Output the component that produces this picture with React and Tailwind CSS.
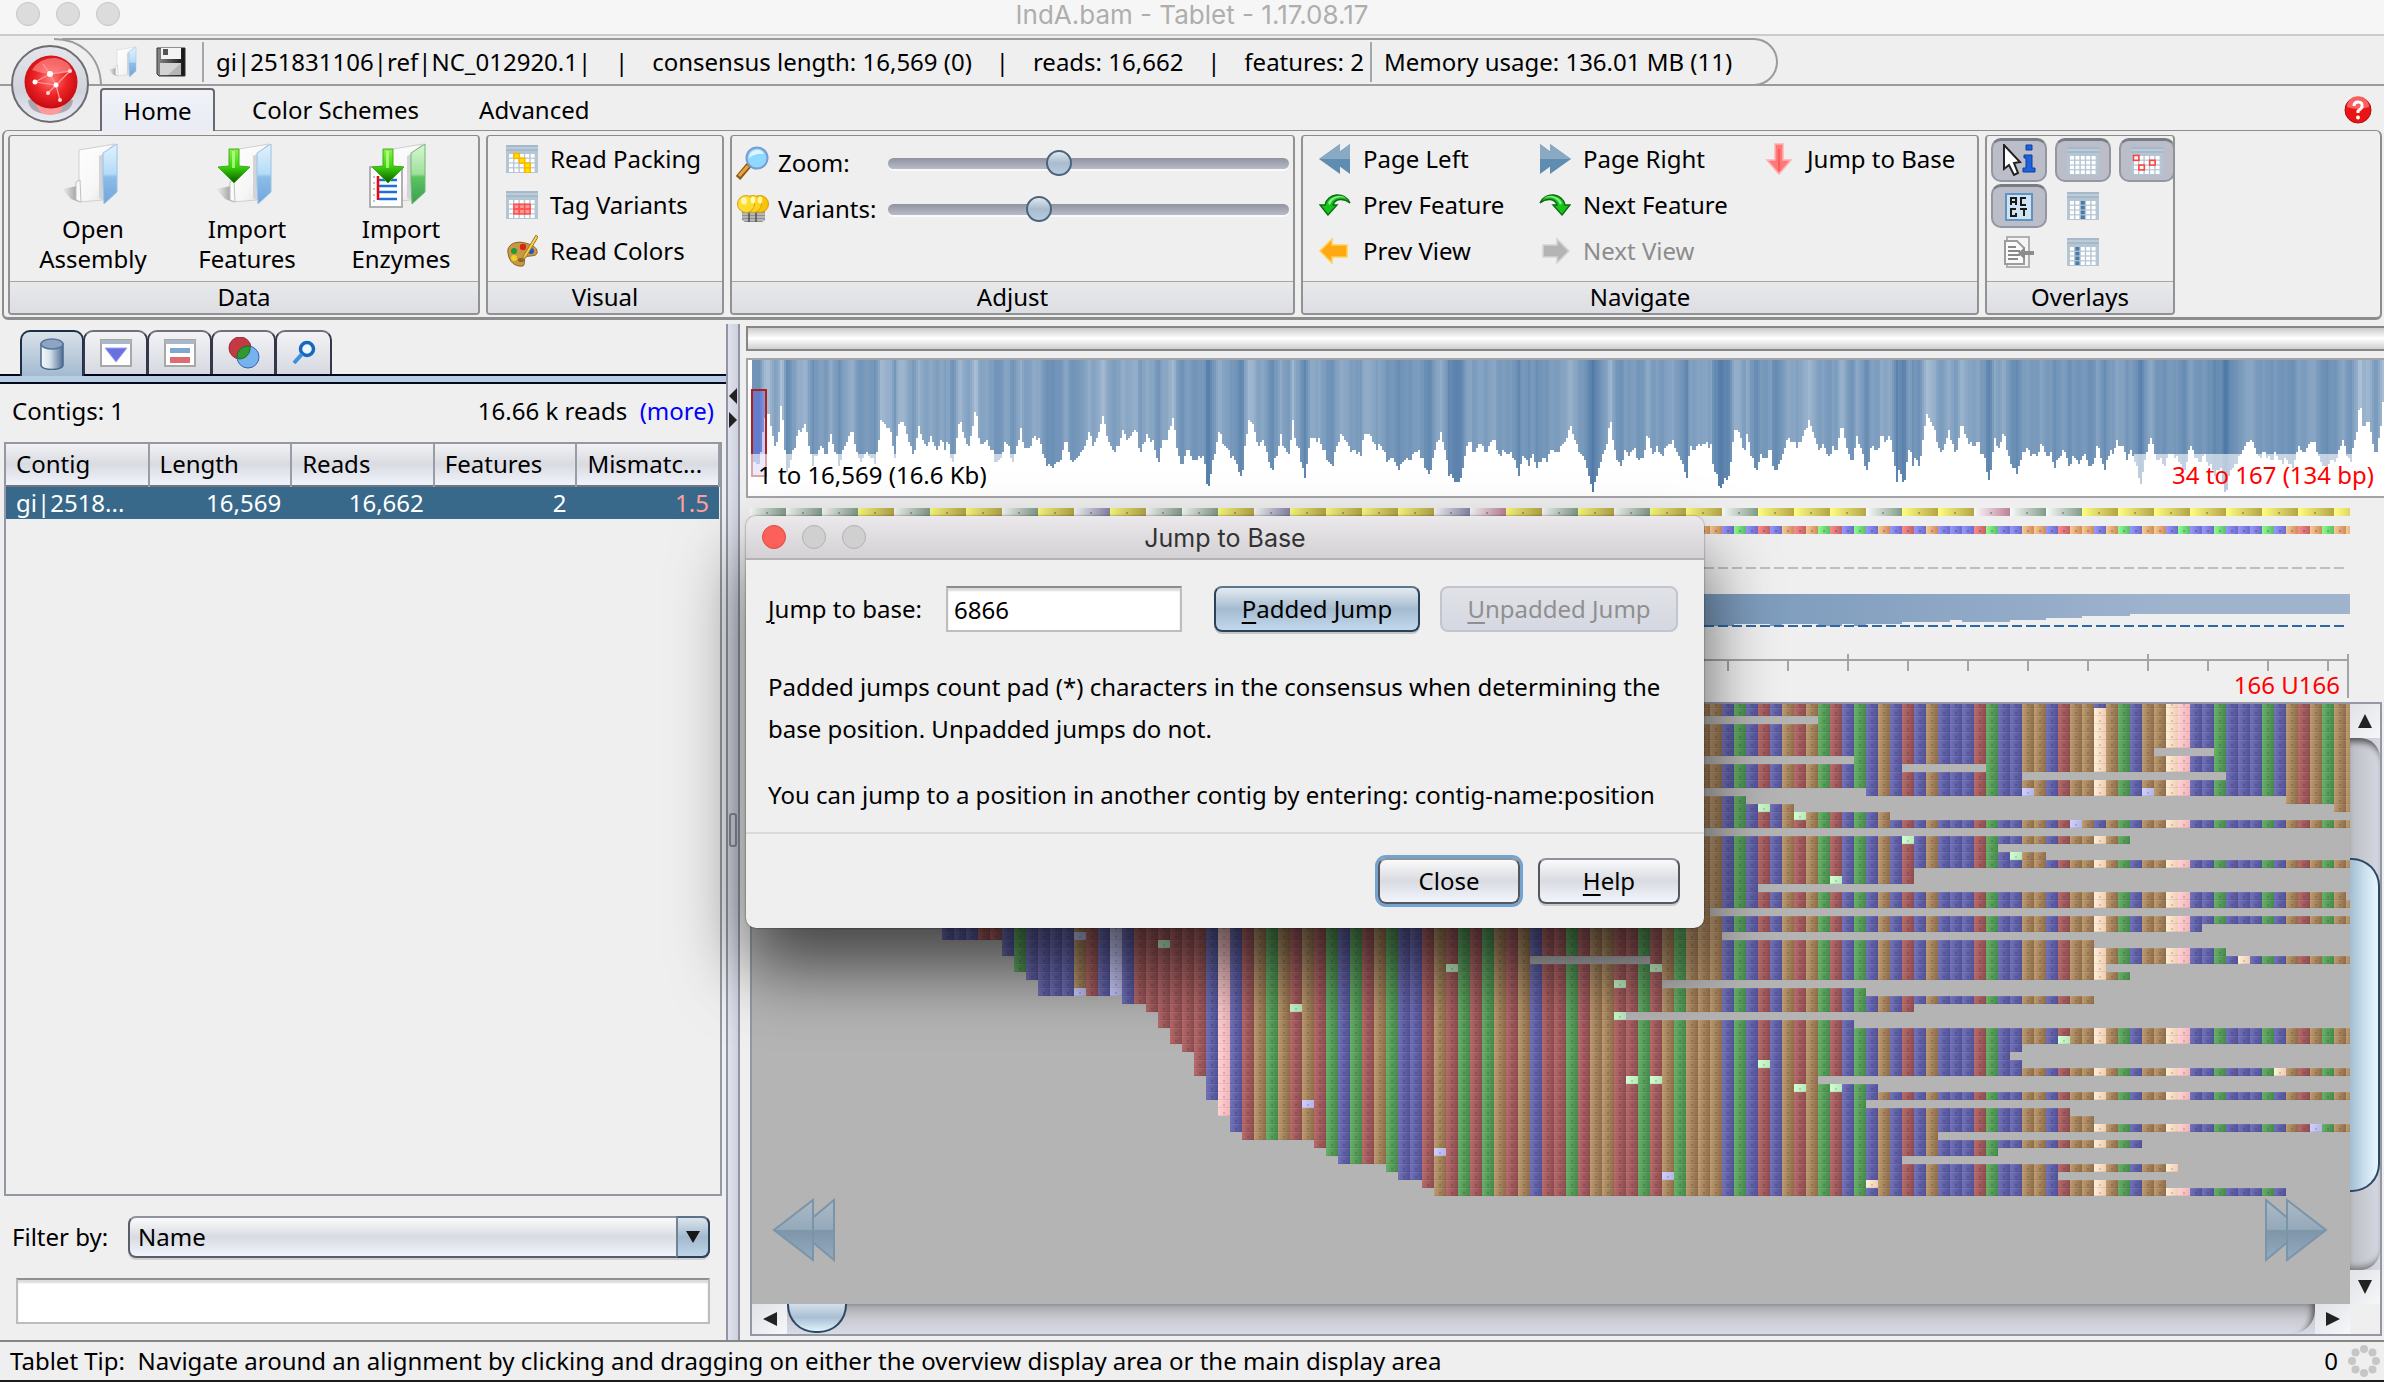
import React, { useState } from "react";

/* ---------- data ---------- */

// Consensus bases by column, starting at base 34.
const BASES =
  "BRGOBGRBBOGRRBOG" +
  "BBBRRBGBBBBORBTB" +
  "RRRRRRBPBROGOROR" +
  "GBGROGBBRORGRGOR" +
  "OBRRGROORRGROGOO" +
  "OBGBRBOROGRBGBOB" +
  "RBOBBBRGBBOOBROO" +
  "VOGBOOVPBBGBBBGB" +
  "OROGOO";

const CONSENSUS_RIGHT = "OOBGBRBOROGRBGBOBRBOBBBRGBBOOBROOBOGBOOBGBBGBBBGBOROGOO";

const PROTEINS = "GGGYGYYGYBYGGYBYYYYBPYGYGYYGYYYGYYPGGYYYYYYYY";

// First visible column of each read row, from row 26 down.
const STARTS = [
  16, 16, 16, 16, 21, 21, 22, 22, 23, 24, 24, 31, 33, 34, 34, 35, 35, 36, 37, 37, 37, 38, 38, 38, 39, 39,
  40, 40, 41, 47, 48, 49, 53, 54, 56, 57,
];

// Empty stretches in the packed rows: row, first column, end column.
const GAPS = [
  [2, 60, 89], [6, 117, 122], [7, 60, 92], [8, 96, 103], [9, 106, 123], [11, 60, 93], [12, 83, 128],
  [13, 87, 132], [14, 95, 134], [16, 60, 134], [17, 115, 134], [18, 104, 134], [19, 108, 134],
  [21, 97, 134], [22, 97, 134], [23, 84, 134], [24, 133, 134], [26, 80, 134], [28, 121, 134],
  [29, 81, 134], [30, 112, 134], [31, 123, 134], [32, 65, 75], [33, 113, 134], [34, 115, 134],
  [35, 76, 134], [36, 93, 134], [37, 112, 134], [38, 97, 134], [39, 73, 134], [40, 92, 134],
  [43, 106, 134], [44, 105, 134], [45, 106, 134], [47, 89, 134], [48, 94, 134], [50, 93, 134],
  [51, 110, 134], [52, 112, 134], [54, 99, 134], [55, 116, 134], [56, 104, 134], [57, 96, 134],
  [58, 119, 134], [59, 109, 134], [60, 118, 134], [61, 128, 134],
];

// Single variant bases: row, column, kind.
const VARIANTS = [
  [0, 112, "B"], [0, 118, "V"], [11, 106, "T"], [11, 116, "T"], [13, 84, "L"], [14, 87, "L"], [15, 110, "T"],
  [15, 112, "B"], [17, 96, "L"], [19, 105, "L"], [22, 90, "L"], [32, 124, "V"], [42, 109, "L"], [45, 84, "L"],
  [46, 127, "V"], [48, 87, "L"], [48, 90, "L"], [53, 130, "T"], [60, 93, "V"], [29, 27, "T"],
  [36, 27, "T"], [30, 34, "L"], [33, 58, "L"], [33, 75, "L"], [35, 72, "L"], [38, 45, "L"],
  [39, 72, "L"], [47, 73, "L"], [47, 75, "L"], [50, 46, "T"], [56, 57, "T"], [59, 76, "T"],
];

const COVERAGE_A = [
  36, 420, 46, 420, 50, 360, 54, 290, 62, 285, 66, 340, 72, 380, 76, 345, 80, 262, 84, 320, 88, 450, 95, 440,
  100, 390, 106, 345, 114, 325, 120, 305, 124, 360, 130, 430, 138, 405, 146, 380, 152, 405, 160, 345, 166, 385,
  174, 440, 180, 380, 188, 350, 194, 330, 200, 375, 208, 420, 216, 385, 224, 405, 230, 430, 236, 360, 240, 300,
  248, 310, 256, 330, 262, 415, 268, 320, 275, 305, 282, 350, 290, 400, 296, 375, 300, 300, 306, 350, 312, 390,
  320, 340, 328, 395, 336, 355, 342, 385, 348, 365, 354, 450, 360, 370, 366, 290, 372, 340, 380, 388, 386, 330,
  392, 270, 398, 380, 406, 360, 414, 370, 424, 430, 432, 420, 438, 370, 444, 380, 452, 425, 458, 370, 464, 330,
  470, 380, 478, 395, 486, 350, 494, 365, 502, 420, 512, 445, 520, 420, 528, 415, 536, 355, 544, 430, 552, 420,
  558, 400, 568, 380, 574, 325, 580, 385, 588, 345, 596, 290, 604, 365, 612, 400, 620, 380, 626, 325, 634, 355,
  642, 345, 648, 325, 654, 405, 662, 360, 668, 345, 676, 370, 684, 425, 690, 370, 698, 355, 708, 290, 714, 380,
  720, 440, 730, 385, 740, 425, 750, 400, 758, 430, 764, 520, 768, 450, 774, 400, 782, 325, 790, 380, 800, 410,
  810, 430, 818, 470, 824, 350, 830, 290, 838, 340, 844, 380, 850, 360, 858, 410, 866, 448, 874, 400, 880, 340,
  888, 405, 894, 410, 899, 300, 904, 370, 910, 400, 918, 470, 926, 370, 932, 340, 940, 360, 950, 400, 962, 440,
  970, 370, 976, 350, 984, 365, 992, 385, 1000, 400, 1008, 400, 1016, 325, 1024, 350, 1032, 385, 1042, 375,
  1050, 425, 1060, 410, 1070, 445, 1078, 415, 1086, 430, 1096, 385, 1106, 420, 1116, 460, 1124, 420, 1130, 365,
  1136, 330, 1142, 380, 1148, 460, 1160, 490, 1170, 460, 1176, 385, 1182, 355, 1190, 410, 1198, 360, 1206, 400,
  1214, 370, 1220, 355, 1230, 400, 1240, 400, 1252, 410, 1260, 465, 1268, 410, 1276, 435, 1284, 400, 1290, 445,
  1298, 415, 1306, 420, 1312, 390, 1322, 400, 1330, 370, 1338, 355, 1344, 315, 1350, 370, 1358, 390, 1364, 400,
  1372, 460, 1380, 515, 1388, 450, 1396, 400, 1402, 370, 1407, 295, 1412, 365, 1418, 430, 1424, 440, 1430, 390,
  1438, 400, 1446, 385, 1452, 430, 1460, 400, 1468, 340, 1474, 400, 1482, 380, 1490, 410, 1498, 375, 1506, 355,
  1514, 400, 1522, 420, 1530, 480, 1534, 385, 1542, 400, 1550, 370, 1558, 375, 1568, 380,
];
const COVERAGE_B = [
  52, 450, 60, 470, 69, 520, 76, 465, 84, 470, 90, 440, 95, 370, 101, 305, 106, 330, 112, 355, 120, 400,
  128, 340, 136, 400, 147, 470, 156, 395, 166, 425, 178, 385, 190, 455, 200, 420, 210, 395, 218, 350, 228, 365,
  240, 380, 252, 360, 262, 320, 268, 305, 278, 335, 290, 405, 300, 370, 310, 420, 322, 380, 328, 410, 335, 350,
  341, 312, 350, 375, 364, 430, 376, 350, 384, 380, 392, 425, 400, 455, 406, 390, 414, 375, 422, 405, 432, 330,
  440, 370, 449, 330, 456, 385, 464, 480, 472, 455, 483, 490, 490, 410, 495, 385, 500, 440, 508, 410, 516, 440,
  522, 380, 530, 320, 535, 270, 540, 305, 548, 310, 556, 365, 566, 400, 574, 370, 583, 330, 590, 365, 598, 395,
  606, 350, 612, 300, 620, 345, 630, 370, 640, 375, 648, 360, 656, 400, 664, 420, 674, 485, 680, 420, 686, 360,
  696, 380, 708, 330, 714, 380, 724, 440, 738, 460, 746, 410, 760, 380, 770, 405, 782, 415, 792, 360, 800, 400,
  812, 400, 822, 450, 830, 420, 840, 385, 848, 405, 856, 445, 864, 405, 874, 430, 886, 400, 900, 445, 908, 430,
  919, 380, 926, 400, 934, 465, 942, 410, 954, 390, 964, 360, 970, 385, 975, 360, 984, 415, 996, 390, 1004, 430,
  1018, 485, 1026, 410, 1041, 355, 1050, 415, 1060, 420, 1072, 430, 1086, 395, 1100, 420, 1116, 450, 1128, 370,
  1140, 410, 1150, 435, 1160, 405, 1172, 430, 1184, 470, 1196, 440, 1209, 530, 1216, 460, 1230, 430, 1244, 400,
  1256, 370, 1267, 355, 1280, 400, 1292, 405, 1300, 400, 1312, 420, 1322, 395, 1332, 430, 1346, 410, 1360, 450,
  1372, 380, 1382, 395, 1396, 370, 1406, 355, 1416, 395, 1430, 450, 1444, 430, 1456, 425, 1464, 385, 1475, 350,
  1482, 400, 1490, 430, 1500, 370, 1506, 320, 1511, 235, 1516, 300, 1522, 325, 1530, 305, 1536, 330, 1544, 400,
  1552, 385, 1560, 300, 1566, 200,
];

function coveragePoints() {
  const pts = [];
  for (let i = 0; i < COVERAGE_A.length; i += 2) pts.push([COVERAGE_A[i] / 1.6 - 22, (COVERAGE_A[i + 1] - 120) / 3]);
  for (let i = 0; i < COVERAGE_B.length; i += 2) pts.push([COVERAGE_B[i] / 2.2594 + 938, (COVERAGE_B[i + 1] - 120) / 3]);
  return pts;
}

function coverageBars() {
  const pts = coveragePoints();
  const bars = [];
  let k = 0;
  let seed = 7;
  for (let x = 0; x < 1634; x += 2) {
    while (k < pts.length - 2 && pts[k + 1][0] < x) k++;
    const [x0, y0] = pts[k];
    const [x1, y1] = pts[k + 1];
    const t = Math.max(0, Math.min(1, (x - x0) / (x1 - x0 || 1)));
    seed = (seed * 1103515245 + 12345) % 2147483648;
    const jitter = ((seed >> 8) % 7) - 3;
    const h = Math.max(4, Math.min(136, 2 * Math.round((y0 + (y1 - y0) * t + jitter) / 2)));
    bars.push([x, h]);
  }
  return bars;
}

function shade(h) {
  const t = Math.max(0, Math.min(1, (h - 50) / 84));
  const mix = (a, b) => Math.round(a + (b - a) * t);
  return `rgb(${mix(170, 78)},${mix(191, 121)},${mix(213, 166)})`;
}

function readRuns() {
  const runs = [];
  const cell = (r, c) => {
    if (c < (r < 26 ? 16 : STARTS[r - 26])) return null;
    for (const g of GAPS) if (g[0] === r && c >= g[1] && c < g[2]) return null;
    for (const v of VARIANTS) if (v[0] === r && v[1] === c) return v[2];
    return BASES[c];
  };
  for (let c = 0; c < 134; c++) {
    let from = 0;
    let kind = cell(0, c);
    for (let r = 1; r <= 62; r++) {
      const k = r < 62 ? cell(r, c) : undefined;
      if (k !== kind) {
        if (kind) runs.push([c, from, r, kind]);
        from = r;
        kind = k;
      }
    }
  }
  return runs;
}

const BARS = coverageBars();
const RUNS = readRuns();

/* ---------- icons ---------- */

function Folder({ size = 64, green = false, id }) {
  return (
    <svg width={size} height={size} viewBox="0 0 64 64" aria-hidden="true">
      <defs>
        <linearGradient id={id + "a"} x1="0" y1="0" x2="0" y2="1">
          <stop offset="0" stopColor={green ? "#d8f6d4" : "#e3f3fd"} />
          <stop offset=".5" stopColor={green ? "#9fe09b" : "#b4dbf7"} />
          <stop offset=".55" stopColor={green ? "#5cc45f" : "#8dbde8"} />
          <stop offset="1" stopColor={green ? "#3a9e52" : "#6fa5dc"} />
        </linearGradient>
        <linearGradient id={id + "b"} x1="0" y1="0" x2="1" y2="1">
          <stop offset="0" stopColor="#ffffff" />
          <stop offset=".6" stopColor="#f6f6f6" />
          <stop offset="1" stopColor="#d9dadc" />
        </linearGradient>
        <linearGradient id={id + "c"} x1="0" y1="0" x2="1" y2="0">
          <stop offset="0" stopColor="#9a9a9a" stopOpacity="0" />
          <stop offset="1" stopColor="#8a8a8a" stopOpacity=".9" />
        </linearGradient>
      </defs>
      <path d="M1 47 L16 44 L18 60 L10 57 Z" fill={"url(#" + id + "c)"} />
      <path d="M18 8 L54 2 L42 12 L42 58 L18 60 Z" fill={"url(#" + id + "b)"} stroke="#cfcfcf" />
      <path d="M38 14 L42 12 V58 L38 56 Z" fill="#d4d4d8" />
      <path d="M15 40 L19 38 L20 60 L15 58 Z" fill="#fafafa" stroke="#c0c0c0" />
      <path d="M42 11 L56 2 L56 50 L43 62 L42 40 Z" fill={"url(#" + id + "a)"} stroke={green ? "#6cba70" : "#9cc2e6"} />
    </svg>
  );
}

function GreenDown({ className }) {
  return (
    <svg className={className} width="34" height="36" viewBox="0 0 34 36" aria-hidden="true">
      <defs>
        <linearGradient id="gdown" x1="0" y1="0" x2="0" y2="1">
          <stop offset="0" stopColor="#8df04a" />
          <stop offset=".5" stopColor="#3ed80c" />
          <stop offset="1" stopColor="#0a5a00" />
        </linearGradient>
      </defs>
      <path d="M12 1 H22 V18 L33 19 L17 35 L1 19 L12 18 Z" fill="url(#gdown)" stroke="#3fae1c" />
      <path d="M15 3 H18 V20 H15 Z" fill="#c8ff9e" opacity=".7" />
    </svg>
  );
}

function Floppy() {
  return (
    <svg width="30" height="30" viewBox="0 0 30 30" aria-hidden="true">
      <defs>
        <linearGradient id="flop" x1="0" y1="0" x2="1" y2="0">
          <stop offset="0" stopColor="#8a8a8a" />
          <stop offset="1" stopColor="#111" />
        </linearGradient>
      </defs>
      <path d="M1 1 H29 V29 H3 L1 27 Z" fill="url(#flop)" stroke="#333" />
      <path d="M5 1 H25 V12 H5 Z" fill="#f4f4f4" />
      <path d="M7 2 H12 V8 H7 Z" fill="#555" />
      <path d="M4 16 H25 V28 H4 Z" fill="#b5b5b5" />
      <path d="M4 16 H25 L12 28 H4 Z" fill="#d3d3d3" />
    </svg>
  );
}

function Grid({ cells = [], color = "#4a7ba8", fill }) {
  const out = [];
  const marks = [];
  for (let y = 0; y < 4; y++)
    for (let x = 0; x < 5; x++) {
      const hit = cells.some((c) => c[0] === x && c[1] === y);
      out.push(<rect key={x + "-" + y} x={3 + x * 5.4} y={9 + y * 4.8} width="4" height="3.6" fill={hit && !fill ? color : "#fff"} />);
      if (hit && fill)
        marks.push(<rect key={x + "-" + y} x={2.5 + x * 5.4} y={8.5 + y * 4.8} width="5.4" height="4.8" fill={fill} stroke={color} strokeWidth="1.6" />);
    }
  return (
    <svg width="32" height="28" viewBox="0 0 32 28" preserveAspectRatio="none" aria-hidden="true">
      <rect x="0" y="0" width="32" height="28" fill="#b4c5d3" />
      <rect x="0" y="0" width="32" height="6" fill="#a5b9ca" />
      <rect x="0" y="2" width="32" height="2" fill="#bccbd8" />
      {out}
      {marks}
    </svg>
  );
}

const ICONS = {
  palette: (
    <svg width="32" height="32" viewBox="0 0 32 32" aria-hidden="true">
      <path d="M2 18 C0 10 10 5 19 8 C28 10 32 14 31 18 C30 22 24 20 20 22 C17 24 20 28 17 31 C9 32 3 27 2 18 Z" fill="#c99846" stroke="#8c6424" />
      <ellipse cx="15" cy="25" rx="3" ry="2" fill="#8c6424" />
      <circle cx="8" cy="16" r="3" fill="#1f9a3a" />
      <circle cx="17" cy="12" r="3.2" fill="#d8261c" />
      <circle cx="25" cy="16" r="3" fill="#2156c8" />
      <circle cx="8" cy="23" r="3" fill="#f0d020" />
      <path d="M30 0 L32 2 L20 22 L16 25 L18 20 Z" fill="#f0d050" stroke="#a07a20" />
    </svg>
  ),
  zoom: (
    <svg width="34" height="34" viewBox="0 0 34 34" aria-hidden="true">
      <path d="M2 32 L13 19" stroke="#8a5a1c" strokeWidth="6" />
      <path d="M3 30 L12 20" stroke="#f0a040" strokeWidth="3" />
      <circle cx="21" cy="12" r="10.5" fill="#8fd8ff" stroke="#7a9cd0" strokeWidth="2" />
      <path d="M13 12 A8 8 0 0 1 28 8 Q20 7 13 12 Z" fill="#dcf5ff" />
    </svg>
  ),
  bulbs: (
    <svg width="34" height="30" viewBox="0 0 34 30" aria-hidden="true">
      <path d="M6 17 H29 V26 L26 28 H9 L6 26 Z" fill="#8f8f8f" />
      <path d="M6 20 H29 M6 23 H29 M7 26 H28" stroke="#dedede" strokeWidth="1.2" />
      <path d="M13 19 V28 M20 19 V28" stroke="#4a4a4a" strokeWidth="1.4" />
      <circle cx="24" cy="10" r="8.5" fill="#f8c408" stroke="#d49c06" />
      <circle cx="17" cy="10" r="8.5" fill="#fcd420" stroke="#d8a410" />
      <circle cx="10" cy="10" r="8.5" fill="#ffdc30" stroke="#d8a410" />
      <ellipse cx="8" cy="7" rx="3" ry="3.5" fill="#fff8b0" />
      <ellipse cx="17" cy="6" rx="2.4" ry="3.5" fill="#fff8b0" />
      <ellipse cx="24" cy="6" rx="2.4" ry="3.5" fill="#fff4a0" />
    </svg>
  ),
  left: (
    <svg width="32" height="32" viewBox="0 0 32 32" aria-hidden="true">
      <path d="M21 1 V31 L0 16 Z M31 1 V31 L12 17 V15 Z" fill="#5f8db2" />
      <path d="M21 1 V16 H0 Z M31 1 V16 H12 Z" fill="#8aaac4" />
    </svg>
  ),
  right: (
    <svg width="32" height="32" viewBox="0 0 32 32" aria-hidden="true">
      <path d="M11 1 V31 L32 16 Z M1 1 V31 L20 17 V15 Z" fill="#5f8db2" />
      <path d="M11 1 V16 H32 Z M1 1 V16 H20 Z" fill="#8aaac4" />
    </svg>
  ),
  prevFeature: (
    <svg width="32" height="24" viewBox="0 0 32 24" aria-hidden="true">
      <path d="M9 22 L1 12 H6 C8 0 26 -2 31 10 C25 5 16 5 14 12 H18 Z" fill="#17c41c" stroke="#0b6a12" strokeWidth="1.4" />
      <path d="M9 10 C12 3 22 1 27 5 C20 3 13 5 11 12 Z" fill="#8df08a" />
    </svg>
  ),
  nextFeature: (
    <svg width="32" height="24" viewBox="0 0 32 24" aria-hidden="true">
      <path d="M23 22 L31 12 H26 C24 0 6 -2 1 10 C7 5 16 5 18 12 H14 Z" fill="#17c41c" stroke="#0b6a12" strokeWidth="1.4" />
      <path d="M23 10 C20 3 10 1 5 5 C12 3 19 5 21 12 Z" fill="#8df08a" />
    </svg>
  ),
  prevView: (
    <svg width="32" height="28" viewBox="0 0 32 28" aria-hidden="true">
      <path d="M1 14 L13 2 V8 H28 V20 H13 V26 Z" fill="#ffa911" stroke="#ffcf5a" strokeWidth="1.5" />
    </svg>
  ),
  nextView: (
    <svg width="32" height="28" viewBox="0 0 32 28" aria-hidden="true">
      <path d="M30 14 L18 2 V8 H4 V20 H18 V26 Z" fill="#b4b4b4" stroke="#d4d4d4" strokeWidth="1.5" />
    </svg>
  ),
  jump: (
    <svg width="28" height="32" viewBox="0 0 28 32" aria-hidden="true">
      <path d="M14 31 L2 17 H10 V1 H18 V17 H26 Z" fill="#ff7878" stroke="#ffb0b0" strokeWidth="1.5" />
      <path d="M14 28 V6" stroke="#ff5a5a" strokeWidth="2" />
    </svg>
  ),
  info: (
    <svg width="34" height="34" viewBox="0 0 34 34" aria-hidden="true">
      <path d="M2 1 V25 L7 21 L12 31 L16 29 L12 19 L18 18 Z" fill="#fff" stroke="#222" strokeWidth="2" />
      <path d="M24 1 H30 V6 H24 Z M22 11 H30 V24 H33 V28 H21 V24 H24 V14 H22 Z" fill="#1f63dc" stroke="#0f3f9c" />
    </svg>
  ),
  acgt: (
    <svg width="28" height="28" viewBox="0 0 28 28" aria-hidden="true">
      <rect x="1" y="1" width="26" height="26" fill="#cfe3f3" stroke="#5c94c4" strokeWidth="2" />
      <path
        d="M6 12 V5 H11 V12 M6 9 H11 M21 5 H16 V12 H21 M11 16 H6 V23 H11 V20 M15 16 H22 M19 16 V23"
        fill="none"
        stroke="#1a1a1a"
        strokeWidth="2"
      />
    </svg>
  ),
  doc: (
    <svg width="32" height="32" viewBox="0 0 32 32" aria-hidden="true">
      <path d="M4 1 H26 V31 H4 Z" fill="#f4f4f4" stroke="#b0b0b0" strokeWidth="2" />
      <path d="M2 5 H14 L21 12 V28 H2 Z" fill="#fafafa" stroke="#9c9c9c" strokeWidth="2" />
      <path d="M5 11 H13 M5 15 H17 M5 19 H17 M5 23 H15" stroke="#888" strokeWidth="2" />
      <path d="M15 17 L22 11 V15 H31 V19 H22 V24 Z" fill="#8c8c8c" />
    </svg>
  ),
  cylinder: (
    <svg width="24" height="32" viewBox="0 0 24 32" aria-hidden="true">
      <defs>
        <linearGradient id="cyl" x1="0" y1="0" x2="1" y2="0">
          <stop offset="0" stopColor="#f4f8fb" />
          <stop offset=".4" stopColor="#d8e2ec" />
          <stop offset="1" stopColor="#4f6f96" />
        </linearGradient>
      </defs>
      <path d="M1 6 V27 C1 33 23 33 23 27 V6 Z" fill="url(#cyl)" stroke="#4c668a" strokeWidth="1.5" />
      <ellipse cx="12" cy="6" rx="11" ry="5" fill="#8ba5c2" stroke="#5a7698" strokeWidth="1.5" />
    </svg>
  ),
  triangle: (
    <svg width="32" height="28" viewBox="0 0 32 28" aria-hidden="true">
      <rect x="1" y="1" width="30" height="26" fill="#fff" stroke="#a8a8a8" strokeWidth="2" />
      <rect x="1" y="1" width="30" height="4" fill="#a9b7c6" />
      <path d="M5 9 H27 L16 23 Z" fill="#6a70e0" stroke="#9fa4f0" />
    </svg>
  ),
  lines: (
    <svg width="32" height="28" viewBox="0 0 32 28" aria-hidden="true">
      <rect x="1" y="1" width="30" height="26" fill="#fff" stroke="#a8a8a8" strokeWidth="2" />
      <rect x="1" y="1" width="30" height="4" fill="#a9b7c6" />
      <rect x="6" y="9" width="20" height="5" fill="#7fa8d0" />
      <rect x="6" y="18" width="20" height="6" fill="#de6a72" />
    </svg>
  ),
  venn: (
    <svg width="32" height="32" viewBox="0 0 32 32" aria-hidden="true">
      <circle cx="12" cy="11" r="11" fill="#c43a44" stroke="#9c2c38" />
      <circle cx="20" cy="20" r="11" fill="#76b2ee" stroke="#3a62b4" />
      <path d="M9 20 A11 11 0 0 1 22 9.200 A11 11 0 0 1 11 22 Z" fill="#2f9a30" stroke="#1c6a24" />
    </svg>
  ),
  search: (
    <svg width="24" height="26" viewBox="0 0 24 26" aria-hidden="true">
      <circle cx="15" cy="9" r="6.500" fill="#eef6ff" stroke="#1668bc" strokeWidth="3.500" />
      <path d="M10 14 L2 23" stroke="#3b92e0" strokeWidth="4" />
    </svg>
  ),
};

function Logo() {
  return (
    <svg width="80" height="80" viewBox="0 0 80 80" aria-hidden="true">
      <defs>
        <radialGradient id="ball" cx=".5" cy=".45" r=".55">
          <stop offset="0" stopColor="#ff7a78" />
          <stop offset=".55" stopColor="#ee2426" />
          <stop offset="1" stopColor="#c40a10" />
        </radialGradient>
        <linearGradient id="ring" x1="0" y1="0" x2="0" y2="1">
          <stop offset="0" stopColor="#e4e6ec" />
          <stop offset=".6" stopColor="#d0d3dc" />
          <stop offset="1" stopColor="#e9ecf4" />
        </linearGradient>
      </defs>
      <circle cx="40" cy="40" r="38" fill="url(#ring)" stroke="#6d6d70" strokeWidth="2" />
      <path d="M18 56 Q40 50 63 56 Q62 70 40 70 Q19 70 18 56 Z" fill="#8b8188" opacity=".6" />
      <path d="M26 58 H54 Q52 71 40 71 Q28 71 26 58 Z" fill="#ff9a9a" />
      <circle cx="41" cy="38" r="26.500" fill="url(#ball)" />
      <path d="M22 26 Q30 13 46 14 Q60 17 62 27 Q44 34 22 26 Z" fill="#ff9a98" opacity=".6" />
      <path d="M33 20 L40 30 L60 27 M40 30 L25 38 M40 30 L46 41 L25 38 M46 41 L60 27 M46 41 L38 49 M46 41 L50 56" stroke="#ff9c9c" strokeWidth="1.200" fill="none" />
      <circle cx="40" cy="30" r="3" fill="#fff" />
      <circle cx="25" cy="38" r="2.500" fill="#fff" />
      <circle cx="46" cy="41" r="2.500" fill="#fff" />
      <circle cx="60" cy="27" r="2" fill="#ffdada" />
      <circle cx="38" cy="49" r="2" fill="#ffdada" />
      <circle cx="50" cy="56" r="2" fill="#ffdada" />
    </svg>
  );
}

/* ---------- ribbon ---------- */

function Group({ title, className, children }) {
  return (
    <section className={"flex flex-col overflow-hidden rounded-[4px] border-2 border-t border-[#929292] border-t-[#8a8a8a] " + className}>
      <div className="flex-1">{children}</div>
      <h2 className="h-[32px] border-t border-[#a4a4a4] bg-linear-to-b from-[#e8e9eb] to-[#dcdee3] text-center leading-[30px]">
        {title}
      </h2>
    </section>
  );
}

function BigButton({ icon, top, bottom, className }) {
  return (
    <button type="button" className={"flex flex-col items-center pt-1.5 leading-[30px] " + className}>
      <span className="relative mb-2 h-[64px] w-[64px]">{icon}</span>
      <span>{top}</span>
      <span>{bottom}</span>
    </button>
  );
}

function RibbonButton({ icon, children, disabled }) {
  return (
    <button type="button" disabled={disabled} className="flex h-[46px] items-center gap-3 whitespace-nowrap disabled:text-[#8c8c8c]">
      <span className="flex w-8 justify-center">{icon}</span>
      {children}
    </button>
  );
}

function RibbonSlider({ id, icon, label, initial }) {
  const [value, setValue] = useState(initial);
  return (
    <div className="flex h-[46px] items-center pl-1 pr-1">
      <span className="w-[42px]">{icon}</span>
      <label htmlFor={id} className="w-[110px]">
        {label}
      </label>
      <input
        id={id}
        type="range"
        min="0"
        max="1000"
        value={value}
        onChange={(e) => setValue(Number(e.target.value))}
        className="h-[11px] min-w-0 flex-1 appearance-none rounded-full bg-linear-to-b from-[#8f939f] to-[#b9bcc8] shadow-[0_2px_0_#fafafa] [&::-webkit-slider-thumb]:h-[26px] [&::-webkit-slider-thumb]:w-[26px] [&::-webkit-slider-thumb]:appearance-none [&::-webkit-slider-thumb]:rounded-full [&::-webkit-slider-thumb]:border-2 [&::-webkit-slider-thumb]:border-[#4b647c] [&::-webkit-slider-thumb]:bg-linear-to-b [&::-webkit-slider-thumb]:from-[#dfe7ee] [&::-webkit-slider-thumb]:via-[#a9bccf] [&::-webkit-slider-thumb]:to-[#b7cbdf]"
      />
    </div>
  );
}

function Toggle({ icon, label, on }) {
  return (
    <button
      type="button"
      aria-label={label}
      aria-pressed={!!on}
      className={
        on
          ? "flex h-[44px] w-[56px] items-center justify-center rounded-[10px] border-2 border-t-[3px] border-[#9497a1] border-t-[#7a7c84] bg-[#bbbec8]"
          : "flex h-[44px] w-[56px] items-center justify-center"
      }
    >
      {icon}
    </button>
  );
}

function Ribbon() {
  return (
    <div className="mx-0.5 flex h-[190px] gap-1.5 rounded-[6px] border-2 border-t border-b-[3px] border-[#8d8d8d] px-1 pt-1 pb-0.5">
      <Group title="Data" className="w-[472px]">
        <div className="flex justify-between pl-5 pr-3.5">
          <BigButton className="w-[126px]" icon={<Folder id="f1" />} top="Open" bottom="Assembly" />
          <BigButton
            className="w-[126px]"
            icon={
              <>
                <Folder id="f2" />
                <GreenDown className="absolute left-0.5 top-1.5" />
              </>
            }
            top="Import"
            bottom="Features"
          />
          <BigButton
            className="w-[126px]"
            icon={
              <>
                <Folder id="f3" green />
                <svg className="absolute left-0 top-6" width="34" height="42" viewBox="0 0 34 42" aria-hidden="true">
                  <rect x="1" y="1" width="32" height="40" fill="#fff" stroke="#b0b0b0" strokeWidth="2" />
                  <path d="M9 10 V34" stroke="#f00" strokeWidth="2.500" />
                  <path d="M10 14 H28 M10 20 H28 M10 26 H28 M10 33 H28" stroke="#1c6fd4" strokeWidth="2.500" />
                  <path d="M5 10 V36" stroke="#c4c4c4" strokeWidth="2" strokeDasharray="2 4" />
                </svg>
                <GreenDown className="absolute left-0.5 top-1.5" />
              </>
            }
            top="Import"
            bottom="Enzymes"
          />
        </div>
      </Group>
      <Group title="Visual" className="w-[238px]">
        <div className="flex flex-col pl-[18px]">
          <RibbonButton icon={<Grid color="#ffb400" fill="#ffe600" cells={[[1, 0], [2, 1], [3, 2], [3, 3]]} />}>Read Packing</RibbonButton>
          <RibbonButton icon={<Grid color="#ff5050" fill="#ff9c9c" cells={[[1, 1], [2, 1], [3, 1], [1, 2], [2, 2], [3, 2]]} />}>Tag Variants</RibbonButton>
          <RibbonButton icon={ICONS.palette}>Read Colors</RibbonButton>
        </div>
      </Group>
      <Group title="Adjust" className="w-[565px]">
        <div className="pt-1">
          <RibbonSlider id="zoom" icon={ICONS.zoom} label="Zoom:" initial={422} />
          <RibbonSlider id="variants" icon={ICONS.bulbs} label="Variants:" initial={369} />
        </div>
      </Group>
      <Group title="Navigate" className="w-[678px]">
        <div className="grid grid-cols-[220px_224px_auto] pl-4">
          <RibbonButton icon={ICONS.left}>Page Left</RibbonButton>
          <RibbonButton icon={ICONS.right}>Page Right</RibbonButton>
          <RibbonButton icon={ICONS.jump}>Jump to Base</RibbonButton>
          <RibbonButton icon={ICONS.prevFeature}>Prev Feature</RibbonButton>
          <RibbonButton icon={ICONS.nextFeature}>Next Feature</RibbonButton>
          <span />
          <RibbonButton icon={ICONS.prevView}>Prev View</RibbonButton>
          <RibbonButton icon={ICONS.nextView} disabled>
            Next View
          </RibbonButton>
        </div>
      </Group>
      <Group title="Overlays" className="w-[190px]">
        <div className="grid grid-cols-[56px_56px_56px] gap-x-2 gap-y-0.5 pl-1 pt-0.5">
          <Toggle on label="Show read info" icon={ICONS.info} />
          <Toggle on label="Show column overlay" icon={<Grid />} />
          <Toggle on label="Highlight variants" icon={<Grid color="#ff4040" fill="#ffffff" cells={[[0, 0], [3, 1], [1, 2]]} />} />
          <Toggle on label="Show bases" icon={ICONS.acgt} />
          <Toggle label="Highlight column" icon={<Grid cells={[[2, 0], [2, 1], [2, 2], [2, 3]]} />} />
          <span />
          <Toggle label="Export" icon={ICONS.doc} />
          <Toggle label="Highlight row" icon={<Grid cells={[[1, 0], [1, 1], [1, 2], [1, 3]]} />} />
        </div>
      </Group>
    </div>
  );
}

/* ---------- left panel ---------- */

const TABS = [
  ["Contigs", ICONS.cylinder, "w-[64px]"],
  ["Features", ICONS.triangle, "w-[65px]"],
  ["Reads", ICONS.lines, "w-[65px]"],
  ["Groups", ICONS.venn, "w-[65px]"],
  ["Search", ICONS.search, "w-[57px]"],
];

function LeftPanel() {
  const [filter, setFilter] = useState("");
  return (
    <aside className="flex w-[726px] flex-col pt-2.5">
      <div role="tablist" className="flex border-b-2 border-[#05071c] pl-5">
        {TABS.map(([name, icon, width], i) => (
          <button
            key={name}
            type="button"
            role="tab"
            aria-label={name}
            aria-selected={i === 0}
            className={
              "flex items-center justify-center rounded-t-[10px] border-2 " +
              width +
              (i === 0
                ? " -mb-0.5 h-[46px] border-[#1c3044] border-b-0 bg-linear-to-b from-[#d9e2ea] to-[#a3bad0]"
                : " -ml-px h-[44px] border-b-0 border-[#34384a] border-t-[#70727a] bg-linear-to-b from-[#f3f3f5] to-[#d6d9e1]")
            }
          >
            {icon}
          </button>
        ))}
      </div>
      <div className="h-2 border-b-2 border-[#05071c] bg-[#b8cfe3]" />
      <div className="flex h-[58px] items-center justify-between pb-1 pl-3 pr-3">
        <span>Contigs: 1</span>
        <span>
          16.66 k reads&nbsp;{" "}
          <a href="#more" className="text-[#0000ff]">
            (more)
          </a>
        </span>
      </div>
      <div className="ml-1 mr-1 flex-1 border-2 border-[#9498a4]">
        <table className="w-full table-fixed border-collapse">
          <thead>
            <tr className="h-[42px] border-b-2 border-[#6f7682] bg-linear-to-b from-[#f2f2f4] via-[#d9dbe1] to-[#eff2fa] text-left leading-[38px]">
              {["Contig", "Length", "Reads", "Features", "Mismatc..."].map((h) => (
                <th key={h} className="border-r-2 border-[#9a9da8] pb-0.5 pl-2.5 font-normal">
                  {h}
                </th>
              ))}
            </tr>
          </thead>
          <tbody>
            <tr className="h-[32px] bg-[#39698a] text-right leading-[32px] text-white">
              <td className="pl-2.5 text-left">gi|2518...</td>
              <td className="pr-2.5">16,569</td>
              <td className="pr-2.5">16,662</td>
              <td className="pr-2.5">2</td>
              <td className="pr-2.5 text-[#ffa0a0]">1.5</td>
            </tr>
          </tbody>
        </table>
      </div>
      <div className="mt-5 flex h-[42px] items-center pl-3 pr-4">
        <label htmlFor="filter-by" className="w-[116px]">
          Filter by:
        </label>
        <div className="relative h-[42px] flex-1">
          <select
            id="filter-by"
            className="h-full w-full appearance-none rounded-[8px] border-2 border-[#5a5c66] border-t-[#9092a0] bg-linear-to-b from-[#fbfbfc] via-[#d9dbe2] to-[#f2f5fd] px-2 shadow-[0_2px_0_#cfcfcf]"
          >
            <option>Name</option>
            <option>Length</option>
            <option>Reads</option>
          </select>
          <span className="pointer-events-none absolute inset-y-0 right-0 flex w-[34px] items-center justify-center rounded-r-[8px] border-2 border-[#2a4158] border-t-[#5c7288] border-l-[#6f8496] bg-linear-to-b from-[#dce5ec] via-[#a3b9ce] to-[#bdd4ea]">
            <svg width="14" height="12" viewBox="0 0 14 12" aria-hidden="true">
              <path d="M0 0 H14 L7 12 Z" fill="#181818" />
            </svg>
          </span>
        </div>
      </div>
      <input
        aria-label="Filter text"
        value={filter}
        onChange={(e) => setFilter(e.target.value)}
        className="mx-4 mb-4 mt-5 h-[46px] border-2 border-[#bdbdbd] border-t-[#909090] bg-white px-2 shadow-[inset_0_3px_2px_#dcdcdc]"
      />
    </aside>
  );
}

function Divider() {
  return (
    <div className="mt-1 flex w-[14px] flex-col items-center border-x-2 border-[#9194a2] bg-linear-to-r from-[#dfe2ec] to-[#cfd2de] pt-16">
      <svg width="8" height="40" viewBox="0 0 8 40" aria-hidden="true">
        <path d="M8 0 V16 L0 8 Z M0 24 V40 L8 32 Z" fill="#222" />
      </svg>
      <span className="my-auto h-[34px] w-[8px] rounded-[3px] border-2 border-[#8c90a0] bg-[#d8dbe4]" />
      <span className="h-[108px]" />
    </div>
  );
}

/* ---------- right panel ---------- */

const READ_COLORS = {
  O: ["#bd9c70", "#8f6c4a"],
  B: ["#7272b8", "#515198"],
  G: ["#68b068", "#468a4c"],
  R: ["#b86a6a", "#8c4c50"],
  L: ["#d0ffd0", "#b8e8bc"],
  T: ["#ceceff", "#b6b6e6"],
  V: ["#fff0d8", "#f0ccb4"],
  P: ["#ffd2d2", "#f2b4ba"],
};
const BASE_COLORS = {
  O: ["#f8cc98", "#cc8c5c"],
  B: ["#9898ff", "#6c6cc8"],
  G: ["#8cff90", "#60bc6c"],
  R: ["#ff8c8c", "#c06468"],
};
const PROTEIN_COLORS = {
  G: ["#fafafa", "#7f9c88"],
  Y: ["#ffff80", "#b4a448"],
  B: ["#fafafa", "#8484a8"],
  P: ["#fafafa", "#bc8098"],
};

function Gradients({ prefix, colors }) {
  return Object.entries(colors).map(([k, [a, b]]) => (
    <linearGradient key={k} id={prefix + k} x1="0" y1="0" x2="1" y2="0">
      <stop offset="0" stopColor={a} />
      <stop offset="1" stopColor={b} />
    </linearGradient>
  ));
}

function Overview() {
  return (
    <div className="relative mt-[7px] h-[140px] overflow-hidden border-y-2 border-l-2 border-[#a4a3a8] bg-white">
      <svg className="block h-full w-full" shapeRendering="crispEdges" role="img" aria-label="Coverage overview">
        {BARS.map(([x, h]) => (
          <rect key={x} x={x + 4} y="0" width="2" height={h} fill={shade(h)} />
        ))}
        <rect x="4" y="30" width="14" height="86" fill="#4040ff" fillOpacity=".28" stroke="#b02018" strokeWidth="2" />
      </svg>
      <div className="absolute bottom-0 left-0 h-[42px] min-w-[272px] bg-white/60 pl-2.5 leading-[42px]">1 to 16,569 (16.6 Kb)</div>
      <div className="absolute bottom-0 right-0 h-[42px] min-w-[250px] bg-white/60 px-2.5 text-right leading-[42px] text-[#ff0000]">
        34 to 167 (134 bp)
      </div>
    </div>
  );
}

function Tracks() {
  const steps = [
    [0, 32], [984, 30], [1020, 32], [1032, 30], [1068, 32], [1092, 30], [1104, 32], [1116, 30], [1152, 28],
    [1200, 26], [1212, 28], [1260, 26], [1296, 24], [1332, 22], [1380, 20], [1600, 20],
  ];
  const ticks = [];
  for (let x = 18; x < 1590; x += 60) ticks.push(x);
  return (
    <div className="relative ml-1 mr-[34px] h-[204px]">
      <svg className="block h-full w-full" shapeRendering="crispEdges" role="img" aria-label="Consensus, coverage and scale">
        <defs>
          <Gradients prefix="pr" colors={PROTEIN_COLORS} />
          <Gradients prefix="ba" colors={BASE_COLORS} />
          <linearGradient id="depth" gradientUnits="userSpaceOnUse" x1="980" y1="0" x2="1420" y2="0">
            <stop offset="0" stopColor="#7c9bbc" />
            <stop offset="1" stopColor="#9fb3cd" />
          </linearGradient>
        </defs>
        {[...PROTEINS].map((p, i) => (
          <g key={i}>
            <rect x={i * 36} y="10" width="36" height="8" fill={"url(#pr" + p + ")"} />
            <rect x={i * 36 + 16} y="14" width="2" height="2" fill="#000" opacity=".25" />
          </g>
        ))}
        {[...CONSENSUS_RIGHT].map((b, i) => (
          <g key={i}>
            <rect x={948 + i * 12} y="28" width="12" height="8" fill={"url(#ba" + b + ")"} />
            <rect x={953 + i * 12} y="32" width="2" height="2" fill="#000" opacity=".2" />
          </g>
        ))}
        <path d="M2 70 H1596" stroke="#bebebe" strokeWidth="2" strokeDasharray="10 4" />
        {steps.slice(0, -1).map(([x, h], i) => (
          <rect key={i} x={x} y="96" width={steps[i + 1][0] - x} height={h} fill="url(#depth)" />
        ))}
        <path d="M2 128 H1596" stroke="#2f67a6" strokeWidth="2" strokeDasharray="10 4" />
        <path d="M2 162 H1598" stroke="#a4a4a8" strokeWidth="2" />
        {ticks.map((x) => (
          <path key={x} d={(x - 198) % 300 === 0 ? `M${x} 156 V173` : `M${x} 162 V173`} stroke="#a4a4a8" strokeWidth="2" />
        ))}
        <path d="M1598 156 V200" stroke="#a4a4a8" strokeWidth="2" />
      </svg>
      <span className="absolute bottom-0.5 right-2.5 leading-[30px] text-[#ff0000]">166 U166</span>
    </div>
  );
}

function PageArrow({ flip }) {
  return (
    <svg className={flip ? "-scale-x-100" : ""} width="64" height="64" viewBox="0 0 64 64" aria-hidden="true">
      <defs>
        <linearGradient id={"pa" + (flip ? 1 : 0)} x1="0" y1="0" x2="0" y2="1">
          <stop offset="0" stopColor="#adbac6" />
          <stop offset=".49" stopColor="#94a9ba" />
          <stop offset=".51" stopColor="#7f96a9" />
          <stop offset="1" stopColor="#93abc0" />
        </linearGradient>
      </defs>
      <path d="M62 2 V62 L26 32 Z" fill={"url(#pa" + (flip ? 1 : 0) + ")"} stroke="#7c94a8" strokeWidth="2" />
      <path d="M41 2 V62 L2 32 Z" fill={"url(#pa" + (flip ? 1 : 0) + ")"} stroke="#7c94a8" strokeWidth="2" />
    </svg>
  );
}

function Reads() {
  return (
    <div className="relative h-[600px] min-w-0 flex-1 bg-[#b4b4b4]">
      <svg className="block h-full w-full" shapeRendering="crispEdges" role="img" aria-label="Packed reads">
        <defs>
          <Gradients prefix="rd" colors={READ_COLORS} />
          <pattern id="grain" width="12" height="8" x="-2" y="-4" patternUnits="userSpaceOnUse">
            <rect x="5" y="4" width="2" height="2" fill="#000" fillOpacity=".14" />
            <rect x="0" y="7" width="12" height="1" fill="#000" fillOpacity=".07" />
            <rect x="0" y="0" width="12" height="1" fill="#fff" fillOpacity=".07" />
          </pattern>
        </defs>
        {RUNS.map(([c, a, b, k]) => (
          <g key={c + "-" + a}>
            <rect x={c * 12 - 2} y={a * 8 - 4} width="12" height={(b - a) * 8} fill={"url(#rd" + k + ")"} />
            <rect x={c * 12 - 2} y={a * 8 - 4} width="12" height={(b - a) * 8} fill="url(#grain)" />
          </g>
        ))}
      </svg>
      <button type="button" aria-label="Page left" className="absolute bottom-[42px] left-5">
        <PageArrow />
      </button>
      <button type="button" aria-label="Page right" className="absolute bottom-[42px] right-[22px]">
        <PageArrow flip />
      </button>
    </div>
  );
}

function ScrollArrow({ label, d, className }) {
  return (
    <button type="button" aria-label={label} className={"flex items-center justify-center bg-linear-to-br from-[#e0e2e7] to-[#f6f7f9] " + className}>
      <svg width="14" height="14" viewBox="0 0 14 14" aria-hidden="true">
        <path d={d} fill="#222" />
      </svg>
    </button>
  );
}

function Alignment() {
  return (
    <div className="ml-1 mr-0.5 border-2 border-[#9498a4]">
      <div className="flex">
        <Reads />
        <div className="flex w-[30px] flex-col bg-linear-to-r from-[#bcbdc4] to-[#d6d9e2]">
          <ScrollArrow label="Scroll up" d="M7 0 L14 14 H0 Z" className="h-[34px]" />
          <div className="flex flex-1 flex-col rounded-r-[20px] shadow-[inset_0_8px_6px_-4px_#555,inset_0_-8px_6px_-5px_#777]">
            <span className="h-[120px]" />
            <span className="h-[334px] rounded-r-[28px] border-2 border-l-0 border-[#2c4864] bg-linear-to-r from-[#a4bcd2] via-[#c9dfee] to-[#e8f8fc]" />
          </div>
          <ScrollArrow label="Scroll down" d="M0 0 H14 L7 14 Z" className="h-[34px]" />
        </div>
      </div>
      <div className="flex h-[30px]">
        <div className="flex flex-1 bg-linear-to-b from-[#a6a7ad] via-[#cacbd2] to-[#d8dbe6]">
          <ScrollArrow label="Scroll left" d="M0 7 L14 0 V14 Z" className="w-[35px]" />
          <span className="h-[29px] w-[60px] rounded-b-[28px] border-2 border-t-0 border-[#2c4864] bg-linear-to-b from-[#d4dfe9] via-[#a9bfd4] to-[#dff4fb]" />
          <span className="flex-1 rounded-br-[24px] shadow-[inset_-8px_3px_6px_-5px_#555]" />
          <ScrollArrow label="Scroll right" d="M0 0 V14 L14 7 Z" className="w-[35px]" />
        </div>
        <span className="w-[30px] bg-[#efefef]" />
      </div>
    </div>
  );
}

/* ---------- dialog ---------- */

function Accel({ children }) {
  return <span className="underline decoration-2 underline-offset-4">{children}</span>;
}

function JumpDialog() {
  const [base, setBase] = useState("6866");
  return (
    <div
      role="dialog"
      aria-labelledby="jump-title"
      className="absolute left-1.5 top-[196px] w-[958px] overflow-hidden rounded-[10px] bg-[#efefef] shadow-[0_0_2px_rgba(0,0,0,0.6),0_40px_70px_rgba(0,0,0,0.62)]"
    >
      <div className="relative flex h-[44px] items-center justify-center border-b-2 border-[#b4b2b4] bg-linear-to-b from-[#ebe9eb] to-[#d3d1d3]">
        <div className="absolute left-4 flex gap-4">
          <button type="button" aria-label="Close window" className="h-6 w-6 rounded-full border border-[#e2463f] bg-[#fc605b]" />
          <button type="button" aria-label="Minimise window" className="h-6 w-6 rounded-full border border-[#b2b2b2] bg-[#d0d0d0]" />
          <button type="button" aria-label="Zoom window" className="h-6 w-6 rounded-full border border-[#b2b2b2] bg-[#d0d0d0]" />
        </div>
        <h1 id="jump-title" className="pt-1 font-['Inter',sans-serif] text-[25px] text-[#333]">
          Jump to Base
        </h1>
      </div>
      <div className="flex items-center pl-[22px] pr-[26px] pt-[26px]">
        <label htmlFor="jump-base" className="flex-1">
          <Accel>J</Accel>ump to base:
        </label>
        <input
          id="jump-base"
          value={base}
          onChange={(e) => setBase(e.target.value)}
          className="mr-8 h-[46px] w-[236px] border-2 border-[#bdbdbd] border-t-[#8c8c8c] bg-white px-1.5 shadow-[inset_0_3px_2px_#dcdcdc]"
        />
        <button
          type="button"
          className="mr-5 h-[46px] w-[206px] rounded-[8px] border-2 border-[#2a4158] border-t-[#5f7689] bg-linear-to-b from-[#e4ebf1] via-[#a5bbcf] to-[#c2d8ec] shadow-[0_2px_0_#c4c4c4]"
        >
          <Accel>P</Accel>added Jump
        </button>
        <button
          type="button"
          disabled
          className="h-[46px] w-[238px] rounded-[8px] border-2 border-[#c2c5cf] bg-linear-to-b from-[#e0e2e7] to-[#d5d8e1] text-[#8f8f8f]"
        >
          <Accel>U</Accel>npadded Jump
        </button>
      </div>
      <p className="px-[22px] pt-[34px] leading-[42px]">
        Padded jumps count pad (*) characters in the consensus when determining the
        <br />
        base position. Unpadded jumps do not.
      </p>
      <p className="px-[22px] pb-4 pt-6 leading-[42px]">You can jump to a position in another contig by entering: contig-name:position</p>
      <div className="flex justify-end gap-[18px] border-t-2 border-[#dadada] px-6 pb-[24px] pt-[24px]">
        <button
          type="button"
          className="h-[46px] w-[142px] rounded-[8px] border-2 border-[#55565e] border-t-[#90929a] bg-linear-to-b from-[#fafafb] via-[#d9dbe1] to-[#f2f5fc] shadow-[0_0_0_3px_#73a4d1]"
        >
          Close
        </button>
        <button
          type="button"
          className="h-[46px] w-[142px] rounded-[8px] border-2 border-[#55565e] border-t-[#90929a] bg-linear-to-b from-[#fafafb] via-[#d9dbe1] to-[#f2f5fc] shadow-[0_2px_0_#c8c8c8]"
        >
          <Accel>H</Accel>elp
        </button>
      </div>
    </div>
  );
}

/* ---------- window ---------- */

function TitleBar() {
  return (
    <header className="relative flex h-[36px] items-center justify-center border-b-2 border-[#cbcbcb] bg-[#f6f6f6] pb-1">
      <div className="absolute left-4 top-0.5 flex gap-4">
        {["Close", "Minimise", "Zoom"].map((n) => (
          <button key={n} type="button" aria-label={n} className="h-6 w-6 rounded-full border border-[#c6c6c6] bg-[#dcdcdc]" />
        ))}
      </div>
      <h1 className="font-['Inter',sans-serif] text-[26px] leading-[30px] text-[#aeaeae]">IndA.bam - Tablet - 1.17.08.17</h1>
    </header>
  );
}

function QuickBar() {
  return (
    <div className="relative mt-0.5 flex h-[48px] border-b-2 border-[#9b9b9b] pl-[62px]">
      <svg className="absolute left-0 top-0" width="104" height="48" viewBox="0 0 104 48" fill="none" aria-hidden="true">
        <path d="M54 1 C78 1 100 16 101 47" stroke="#9b9b9b" strokeWidth="2" />
      </svg>
      <div className="-mb-0.5 flex items-center rounded-r-full border-y-2 border-r-2 border-[#9b9b9b] pl-[46px] pr-[22px]">
        <button type="button" aria-label="Open">
          <Folder id="f0" size={32} />
        </button>
        <button type="button" aria-label="Save" className="ml-4 mr-4">
          <Floppy />
        </button>
        <span className="h-[40px] border-l-2 border-[#a3a7b0]" />
        <span className="flex w-[1166px] justify-between whitespace-nowrap pl-3 pr-1.5">
          <span>gi|251831106|ref|NC_012920.1|</span>
          <span>|</span>
          <span>consensus length: 16,569 (0)</span>
          <span>|</span>
          <span>reads: 16,662</span>
          <span>|</span>
          <span>features: 2</span>
        </span>
        <span className="h-[40px] border-l-2 border-[#a3a7b0]" />
        <span className="w-[382px] whitespace-nowrap pl-3">Memory usage: 136.01 MB (11)</span>
      </div>
      <button type="button" aria-label="Application menu" className="absolute left-2.5 top-1.5">
        <Logo />
      </button>
    </div>
  );
}

function RibbonTabs() {
  return (
    <nav className="flex h-[44px] items-end pl-[100px]">
      <button
        type="button"
        className="relative -mb-px h-[43px] w-[115px] rounded-t-[4px] border-2 border-b-0 border-[#6a6a6e] bg-linear-to-b from-[#f0f2f8] to-[#e9ecf4]"
      >
        Home
      </button>
      <button type="button" className="ml-[37px] h-[40px]">
        Color Schemes
      </button>
      <button type="button" className="ml-[60px] h-[40px]">
        Advanced
      </button>
      <button type="button" aria-label="Help" className="mb-1.5 ml-auto mr-3">
        <svg width="28" height="28" viewBox="0 0 28 28" aria-hidden="true">
          <circle cx="14" cy="14" r="13" fill="#ea1414" stroke="#b00c0c" />
          <path d="M3 11 A11 11 0 0 1 25 11 Q14 15 3 11 Z" fill="#ff8080" opacity=".7" />
          <path d="M10 10 Q10 6 14 6 Q19 6 18 11 Q17 13 14 15 V17" fill="none" stroke="#fff" strokeWidth="3" />
          <circle cx="14" cy="21.500" r="2" fill="#fff" />
        </svg>
      </button>
    </nav>
  );
}

function Spinner() {
  return (
    <svg width="32" height="32" viewBox="0 0 32 32" fill="#c6c6c6" aria-hidden="true">
      <circle cx="16" cy="4" r="4" />
      <circle cx="24.500" cy="7.500" r="4" />
      <circle cx="28" cy="16" r="4" />
      <circle cx="24.500" cy="24.500" r="4" />
      <circle cx="16" cy="28" r="4" />
      <circle cx="7.500" cy="24.500" r="4" />
      <circle cx="4" cy="16" r="4" />
      <circle cx="7.500" cy="7.500" r="4" />
    </svg>
  );
}

export default function App() {
  return (
    <div className="flex min-h-screen flex-col overflow-hidden bg-[#efefef] font-['Noto_Sans','Open_Sans',sans-serif] text-[24px] text-black">
      <TitleBar />
      <QuickBar />
      <RibbonTabs />
      <Ribbon />
      <main className="relative flex flex-1">
        <LeftPanel />
        <Divider />
        <div className="relative min-w-0 flex-1 pb-1 pl-1.5 pt-1.5">
          <div className="h-[25px] border-2 border-r-0 border-[#868686] bg-linear-to-b from-[#cccccc] via-[#ffffff] to-[#d0d0d0]" />
          <Overview />
          <Tracks />
          <Alignment />
          <JumpDialog />
        </div>
      </main>
      <footer className="flex h-[42px] items-center border-b-2 border-t-2 border-b-[#1c1c20] border-t-[#868686] pl-2.5 pr-1">
        <span>Tablet Tip:&nbsp; Navigate around an alignment by clicking and dragging on either the overview display area or the main display area</span>
        <span className="ml-auto mr-2.5">0</span>
        <Spinner />
      </footer>
    </div>
  );
}
